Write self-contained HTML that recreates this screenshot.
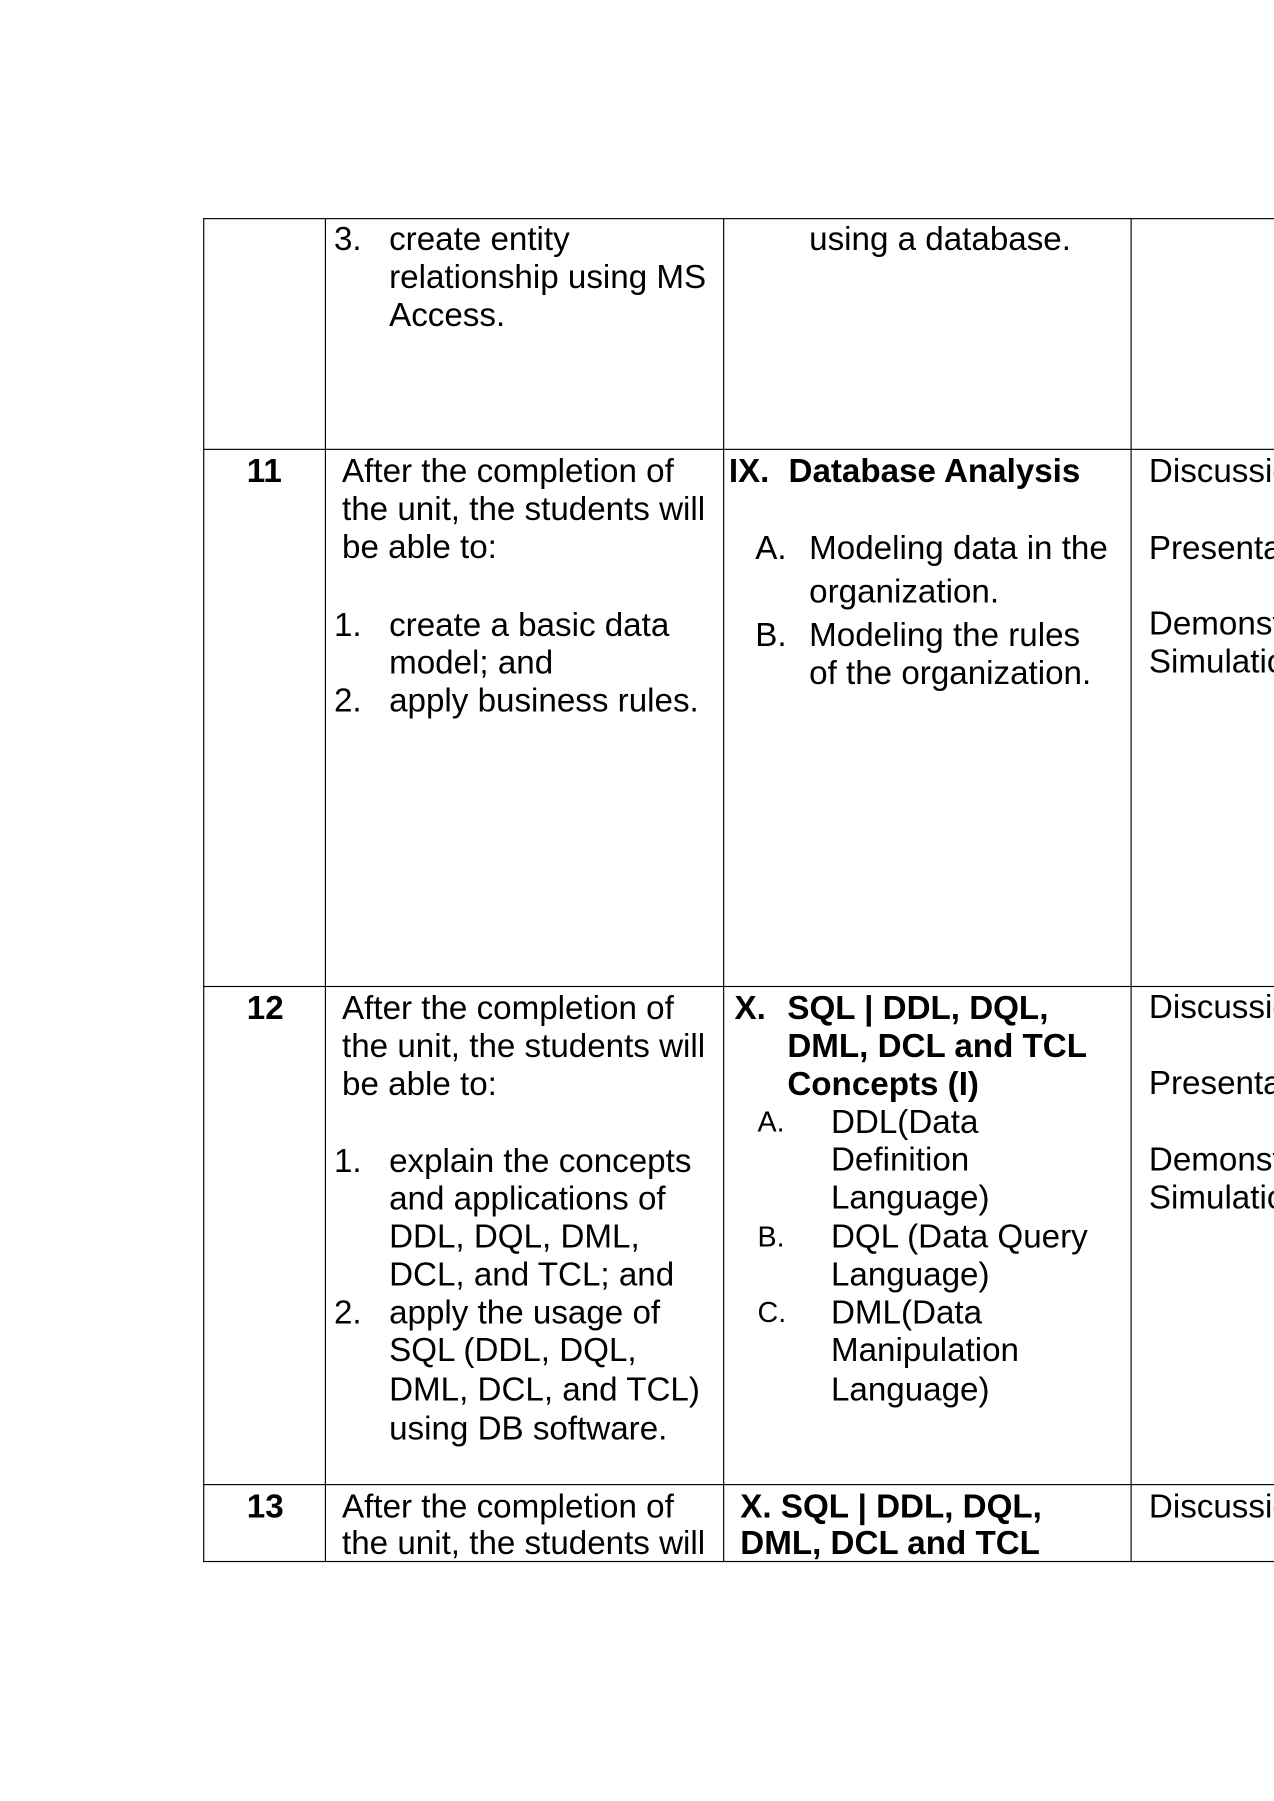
<!DOCTYPE html>
<html><head><meta charset="utf-8"><style>
html,body{margin:0;padding:0;background:#fff;width:1274px;height:1800px;overflow:hidden}
#c{position:absolute;left:0;top:0;width:1110px;height:1569px;overflow:hidden;transform:scale(1.14775);transform-origin:0 0;font-family:"Liberation Sans",Arial,sans-serif;color:#000}
.t{position:absolute;font-size:28.9px;line-height:33px;white-space:nowrap;margin-top:1px}
.b{font-weight:bold}
.s{font-size:25px}
.h{position:absolute;height:1.3px;background:#000}
.v{position:absolute;width:1.3px;background:#000}
</style></head><body><div id="c">
<div class="h" style="left:177px;width:940px;top:190px"></div>
<div class="h" style="left:177px;width:940px;top:391px"></div>
<div class="h" style="left:177px;width:940px;top:859px"></div>
<div class="h" style="left:177px;width:940px;top:1293px"></div>
<div class="h" style="left:177px;width:940px;top:1360px"></div>
<div class="v" style="left:177px;top:190px;height:1171px"></div>
<div class="v" style="left:283px;top:190px;height:1171px"></div>
<div class="v" style="left:630px;top:190px;height:1171px"></div>
<div class="v" style="left:985px;top:190px;height:1171px"></div>

<div class="t" style="left:291px;top:192px">3.</div>
<div class="t" style="left:339px;top:192px">create entity</div>
<div class="t" style="left:339px;top:225px">relationship using MS</div>
<div class="t" style="left:339px;top:258px">Access.</div>
<div class="t" style="left:705px;top:192px">using a database.</div>

<div class="t b" style="left:215px;top:394px">11</div>
<div class="t" style="left:298px;top:394px">After the completion of</div>
<div class="t" style="left:298px;top:427px">the unit, the students will</div>
<div class="t" style="left:298px;top:460px">be able to:</div>
<div class="t" style="left:291px;top:528px">1.</div>
<div class="t" style="left:339px;top:528px">create a basic data</div>
<div class="t" style="left:339px;top:561px">model; and</div>
<div class="t" style="left:291px;top:594px">2.</div>
<div class="t" style="left:339px;top:594px">apply business rules.</div>
<div class="t b" style="left:635px;top:394px">IX.</div>
<div class="t b" style="left:687px;top:394px">Database Analysis</div>
<div class="t" style="left:658px;top:461px">A.</div>
<div class="t" style="left:705px;top:461px">Modeling data in the</div>
<div class="t" style="left:705px;top:499px">organization.</div>
<div class="t" style="left:658px;top:537px">B.</div>
<div class="t" style="left:705px;top:537px">Modeling the rules</div>
<div class="t" style="left:705px;top:570px">of the organization.</div>
<div class="t" style="left:1001px;top:394px">Discussion</div>
<div class="t" style="left:1001px;top:461px">Presentation</div>
<div class="t" style="left:1001px;top:527px">Demonstration</div>
<div class="t" style="left:1001px;top:560px">Simulation</div>

<div class="t b" style="left:215px;top:862px">12</div>
<div class="t" style="left:298px;top:862px">After the completion of</div>
<div class="t" style="left:298px;top:895px">the unit, the students will</div>
<div class="t" style="left:298px;top:928px">be able to:</div>
<div class="t" style="left:291px;top:995px">1.</div>
<div class="t" style="left:339px;top:995px">explain the concepts</div>
<div class="t" style="left:339px;top:1028px">and applications of</div>
<div class="t" style="left:339px;top:1061px">DDL, DQL, DML,</div>
<div class="t" style="left:339px;top:1094px">DCL, and TCL; and</div>
<div class="t" style="left:291px;top:1127px">2.</div>
<div class="t" style="left:339px;top:1127px">apply the usage of</div>
<div class="t" style="left:339px;top:1160px">SQL (DDL, DQL,</div>
<div class="t" style="left:339px;top:1194px">DML, DCL, and TCL)</div>
<div class="t" style="left:339px;top:1228px">using DB software.</div>
<div class="t b" style="left:640px;top:862px">X.</div>
<div class="t b" style="left:686px;top:862px">SQL | DDL, DQL,</div>
<div class="t b" style="left:686px;top:895px">DML, DCL and TCL</div>
<div class="t b" style="left:686px;top:928px">Concepts (I)</div>
<div class="t s" style="left:660px;top:961px">A.</div>
<div class="t" style="left:724px;top:961px">DDL(Data</div>
<div class="t" style="left:724px;top:994px">Definition</div>
<div class="t" style="left:724px;top:1027px">Language)</div>
<div class="t s" style="left:660px;top:1061px">B.</div>
<div class="t" style="left:724px;top:1061px">DQL (Data Query</div>
<div class="t" style="left:724px;top:1094px">Language)</div>
<div class="t s" style="left:660px;top:1127px">C.</div>
<div class="t" style="left:724px;top:1127px">DML(Data</div>
<div class="t" style="left:724px;top:1160px">Manipulation</div>
<div class="t" style="left:724px;top:1194px">Language)</div>
<div class="t" style="left:1001px;top:861px">Discussion</div>
<div class="t" style="left:1001px;top:927px">Presentation</div>
<div class="t" style="left:1001px;top:994px">Demonstration</div>
<div class="t" style="left:1001px;top:1027px">Simulation</div>

<div class="t b" style="left:215px;top:1296px">13</div>
<div class="t" style="left:298px;top:1296px">After the completion of</div>
<div class="t" style="left:298px;top:1328px">the unit, the students will</div>
<div class="t b" style="left:645px;top:1296px">X. SQL | DDL, DQL,</div>
<div class="t b" style="left:645px;top:1328px">DML, DCL and TCL</div>
<div class="t" style="left:1001px;top:1296px">Discussion</div>
</div></body></html>
